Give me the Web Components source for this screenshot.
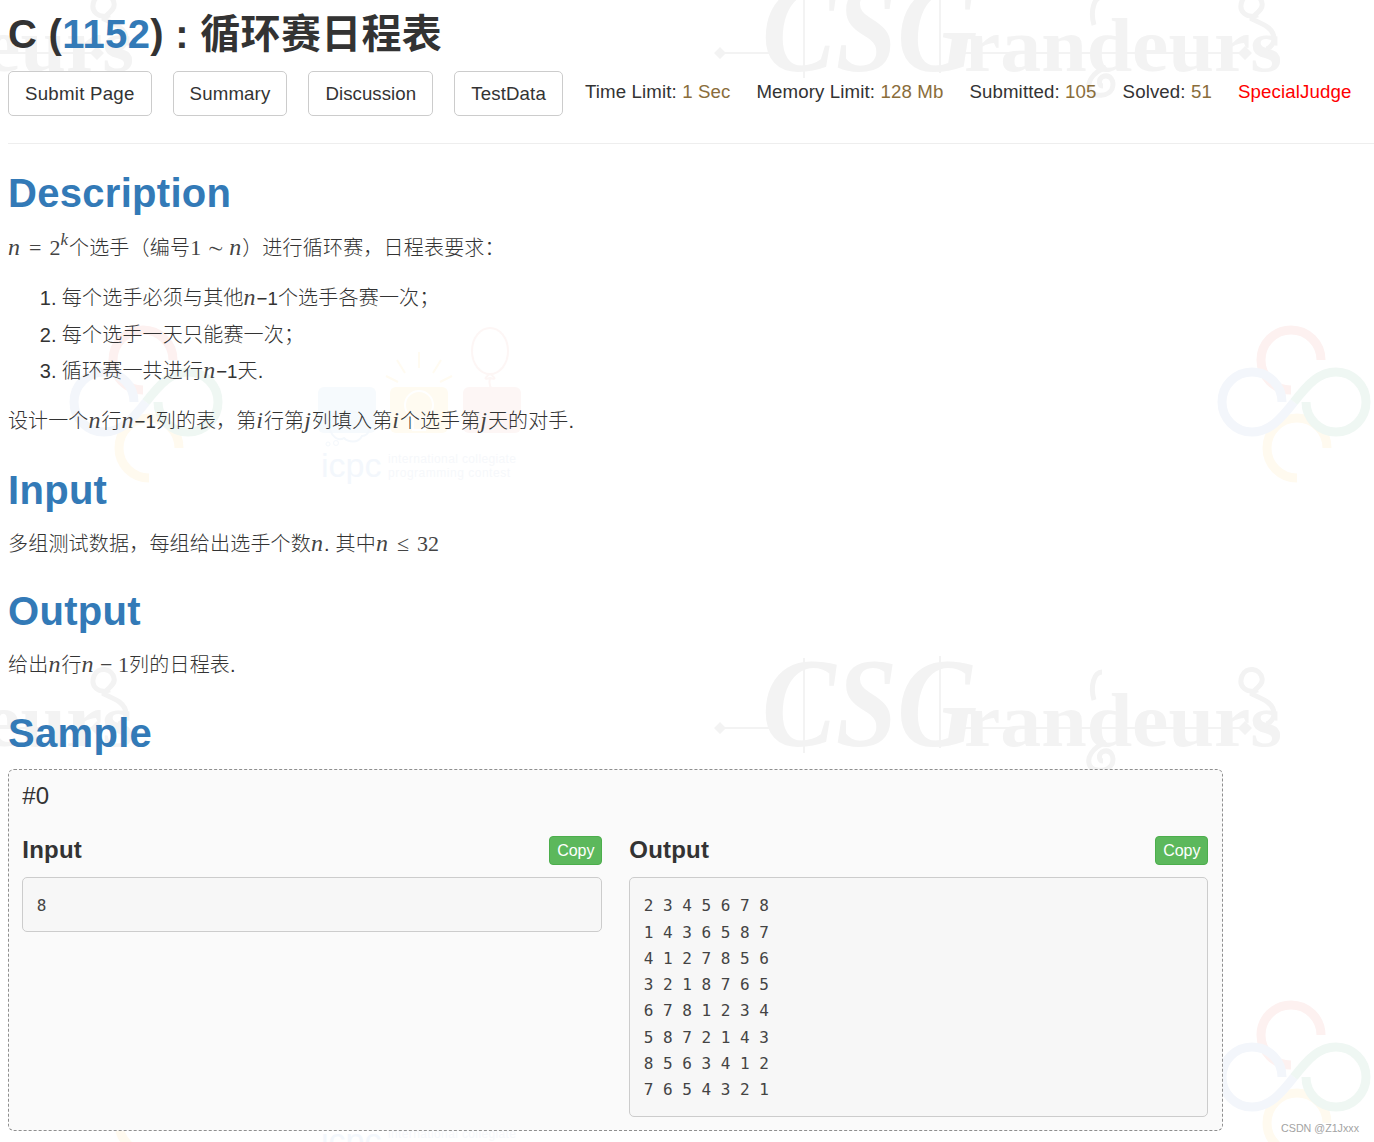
<!DOCTYPE html>
<html lang="zh"><head><meta charset="utf-8"><title>C (1152)</title>
<style>
html,body{margin:0;padding:0;overflow:hidden}
html{background:#fff}
body{font-family:"Liberation Sans","Noto Sans CJK SC",sans-serif;color:#333;font-size:20px;line-height:28.57px}
</style></head><body>
<oj-page>
  <oj-title num="1152" name="循环赛日程表"></oj-title>
  <oj-toolbar>
    <oj-btn style="--ls:.25px">Submit Page</oj-btn><oj-btn>Summary</oj-btn><oj-btn style="--ls:.05px">Discussion</oj-btn><oj-btn>TestData</oj-btn>
    <oj-stat slot="stats" label="Time Limit:" value="1 Sec"></oj-stat>
    <oj-stat slot="stats" label="Memory Limit:" value="128 Mb"></oj-stat>
    <oj-stat slot="stats" label="Submitted:" value="105"></oj-stat>
    <oj-stat slot="stats" label="Solved:" value="51"></oj-stat>
    <oj-stat slot="stats" alert value="SpecialJudge"></oj-stat>
  </oj-toolbar>
  <oj-section heading="Description" first>
    <oj-p><oj-m>n</oj-m><oj-r> = 2</oj-r><oj-m sup>k</oj-m>个选手（编号<oj-r tight>1 ∼ </oj-r><oj-m>n</oj-m>）进行循环赛，日程表要求：</oj-p>
    <oj-list>
      <oj-li n="1.">每个选手必须与其他<oj-m>n</oj-m><oj-d>−1</oj-d>个选手各赛一次；</oj-li>
      <oj-li n="2.">每个选手一天只能赛一次；</oj-li>
      <oj-li n="3.">循环赛一共进行<oj-m>n</oj-m><oj-d>−1</oj-d>天.</oj-li>
    </oj-list>
    <oj-p style="--ls:.1px">设计一个<oj-m>n</oj-m>行<oj-m>n</oj-m><oj-d>−1</oj-d>列的表，第<oj-m>i</oj-m>行第<oj-m>j</oj-m>列填入第<oj-m>i</oj-m>个选手第<oj-m>j</oj-m>天的对手.</oj-p>
  </oj-section>
  <oj-section heading="Input">
    <oj-p>多组测试数据，每组给出选手个数<oj-m>n</oj-m>. 其中<oj-m>n</oj-m><oj-r> ≤ 32</oj-r></oj-p>
  </oj-section>
  <oj-section heading="Output">
    <oj-p>给出<oj-m>n</oj-m>行<oj-m>n</oj-m><oj-r tight> − 1</oj-r>列的日程表.</oj-p>
  </oj-section>
  <oj-section heading="Sample" tight>
    <oj-sample label="#0">
      <oj-code slot="in" heading="Input">8</oj-code>
      <oj-code slot="out" heading="Output">2 3 4 5 6 7 8
1 4 3 6 5 8 7
4 1 2 7 8 5 6
3 2 1 8 7 6 5
6 7 8 1 2 3 4
5 8 7 2 1 4 3
8 5 6 3 4 1 2
7 6 5 4 3 2 1</oj-code>
    </oj-sample>
  </oj-section>
</oj-page>
<script>
const def=(name,css,html)=>{customElements.define(name,class extends HTMLElement{
  constructor(){super();this.attachShadow({mode:"open"}).innerHTML=`<style>${css}</style>`+(typeof html==="function"?html(this):html);}
});};

/* ---- faint background artwork ---- */
const csg=(x,y)=>`<g transform="translate(${x} ${y})" fill="#f3f3f3" font-family="Liberation Serif">
  <path d="M5 0H56M250 0H530" stroke="#f3f3f3" stroke-width="2" fill="none"/>
  <path d="M0 0l6-6 6 6-6 6zM524 0l7-7 7 7-7 7z"/>
  <text x="48" y="18" font-size="128" font-style="italic" font-weight="700" textLength="215" lengthAdjust="spacingAndGlyphs">CSG</text>
  <text x="250" y="18" font-size="76" textLength="318" lengthAdjust="spacingAndGlyphs" font-weight="700">randeurs</text>
  <path d="M90-70V25M226-72V20" stroke="#f3f3f3" stroke-width="2" fill="none"/>
  <path d="M392 14c-14 6-20 16-16 24 4 6 18 6 22-2 3-8-2-16-10-12-4 3-3 9 1 9" stroke="#f3f3f3" stroke-width="5" fill="none"/>
  <path d="M380-28c-4-14 0-28 8-28" stroke="#f3f3f3" stroke-width="5" fill="none"/>
  <path d="M544-38c-12 4-20-4-16-14s18-8 20 2c2 8-10 12-10 16 8 4 22 8 22 20 0 6-6 10-8 10" stroke="#f3f3f3" stroke-width="5" fill="none"/>
</g>`;
const rings=(x,y)=>`<g transform="translate(${x} ${y})" fill="none" stroke-width="9">
  <path d="M27-42A30 30 0 1 0-3-12" stroke="#fdf1f0"/>
  <path d="M33 46A30 30 0 1 0 3 76" stroke="#fffaef"/>
  <path d="M-12 0A30 30 0 1 0-42 30C-25 30-14 18 0 0" stroke="#f3f6fb"/>
  <path d="M0 0C14-18 25-30 42-30A30 30 0 1 1 12 0" stroke="#eff7f3"/>
</g>`;
const icpc=(x,y)=>`<g transform="translate(${x} ${y})">
  <rect x="318" y="387" width="58" height="46" rx="6" fill="#f6fafd"/>
  <rect x="390" y="387" width="58" height="46" rx="6" fill="#fffbf1"/>
  <rect x="463" y="387" width="58" height="46" rx="6" fill="#fdf6f5"/>
  <path d="M419 352v16M397 360l8 13M441 360l-8 13M386 376l12 6M452 376l-12 6" stroke="#fffbf1" stroke-width="2"/>
  <circle cx="419" cy="405" r="14" fill="none" stroke="#fff" stroke-width="2"/>
  <path d="M413 418v12h12v-12" fill="none" stroke="#fff" stroke-width="2"/>
  <ellipse cx="490" cy="351" rx="18" ry="23" fill="none" stroke="#fdf6f5" stroke-width="2"/>
  <path d="M490 374c-6 4-6 6 0 4 6 2 6 0 0-4M490 378c-4 14 14 16 6 40l-6 14" fill="none" stroke="#fdf6f5" stroke-width="2"/>
  <path d="M330 430c-8-10 2-18 10-14 6-8 22-6 24 6 8 2 6 14-2 14-4 8-14 6-18 2-6 4-12-2-14-8z" fill="none" stroke="#f4f8fc" stroke-width="2"/>
  <circle cx="328" cy="444" r="2" fill="none" stroke="#f4f8fc"/><circle cx="336" cy="443" r="2.5" fill="none" stroke="#f4f8fc"/>
  <text x="321" y="477" font-family="Liberation Sans" font-size="34" fill="#f3f7fc">icpc</text>
  <text x="388" y="463" font-family="Liberation Sans" font-size="12" fill="#f6f8fb" textLength="128">international collegiate</text>
  <text x="388" y="477" font-family="Liberation Sans" font-size="12" fill="#f6f8fb" textLength="122">programming contest</text>
</g>`;
def("wm-backdrop",":host{position:absolute;inset:0;z-index:-1;overflow:hidden;display:block}svg{display:block}",
`<svg width="1374" height="1142" viewBox="0 0 1374 1142" aria-hidden="true">
${csg(714,53)}${csg(714,728)}${csg(-434,53)}${csg(-434,728)}
${rings(1294,402)}${rings(1294,1077)}${rings(146,402)}${rings(146,1077)}
${icpc(0,0)}${icpc(0,675)}
</svg>`);

def("oj-page",":host{display:block;position:relative;isolation:isolate;height:1142px;padding-left:8px;box-sizing:border-box;overflow:hidden}.mark{position:absolute;right:15px;bottom:7px;font-size:10.7px;line-height:13px;color:#a3a3a3}",
`<wm-backdrop></wm-backdrop><slot></slot><div class="mark">CSDN @Z1Jxxx</div>`);

def("oj-title",":host{display:block;padding-top:12px;margin-bottom:15px;font-size:40px;line-height:44px;font-weight:700;color:#333;letter-spacing:.3px}b{color:#337ab7;font-weight:700}",
t=>`C (<b>${t.getAttribute("num")}</b>) : ${t.getAttribute("name")}`);

def("oj-toolbar",":host{display:block;padding-bottom:27px;border-bottom:1px solid #eee;margin-bottom:27px}.r{display:flex;gap:21px;align-items:flex-start;height:45px}.s{display:flex;gap:26px;margin-left:1px;height:40px;align-items:center}",
`<div class="r"><slot></slot><div class="s"><slot name="stats"></slot></div></div>`);

def("oj-btn",":host{display:block;box-sizing:border-box;height:45px;padding:8px 16px;border:1px solid #ccc;border-radius:5px;background:#fff;font-size:18.67px;line-height:27px;color:#333;white-space:nowrap;letter-spacing:var(--ls,.15px)}","<slot></slot>");

def("oj-stat",":host{display:block;font-size:18.67px;line-height:27px;white-space:nowrap;color:#333;letter-spacing:.12px}b{font-weight:400;color:#8a6d3b}b.a{color:#f00}",
t=>t.hasAttribute("alert")?`<b class="a">${t.getAttribute("value")}</b>`:`${t.getAttribute("label")} <b>${t.getAttribute("value")}</b>`);

def("oj-section",":host{display:block;margin-bottom:var(--gap,31px)}:host([tight]){margin-bottom:0}h2{margin:0 0 18px;font-size:40px;line-height:44px;font-weight:700;color:#337ab7;letter-spacing:.3px}:host([tight]) h2{margin-bottom:14px}:host([first]) h2{margin-bottom:19px}",
t=>`<h2>${t.getAttribute("heading")}</h2><slot></slot>`);

def("oj-p",":host{display:block;font-weight:300;color:#333;white-space:nowrap;letter-spacing:var(--ls,.2px)}","<slot></slot>");
def("oj-m",`:host{font-family:"Liberation Serif",serif;font-style:italic;font-size:24px;line-height:0;padding-right:1px;font-weight:400;color:#444;letter-spacing:0}:host([sup]){font-size:17px;position:relative;top:-10px;padding-right:1px}`,"<slot></slot>");
def("oj-r",`:host{font-family:"Liberation Serif",serif;font-size:22px;line-height:0;font-weight:400;white-space:pre;word-spacing:2.5px;color:#444;letter-spacing:0}:host([tight]){word-spacing:0}`,"<slot></slot>");
def("oj-d",`:host{font-size:18.67px;font-weight:400;letter-spacing:0}`,"<slot></slot>");

def("oj-list",":host{display:block;margin:17.5px 0 17px;padding-left:53.8px}","<slot></slot>");
def("oj-li",":host{display:block;position:relative;line-height:36px;font-weight:300;white-space:nowrap;letter-spacing:.2px}.n{position:absolute;left:-22px;top:0;font-weight:400;letter-spacing:0}",
t=>`<span class="n">${t.getAttribute("n")}</span><slot></slot>`);

def("oj-sample",":host{display:block;box-sizing:border-box;width:1215px;height:362px;padding:13.33px;border:1px dashed #8f8f8f;border-radius:6px;background:#fafafa}.h{font-size:24px;line-height:26.4px;margin-bottom:27px}.g{display:grid;grid-template-columns:580px 579px;column-gap:27px;align-items:start}",
t=>`<div class="h">${t.getAttribute("label")}</div><div class="g"><slot name="in"></slot><slot name="out"></slot></div>`);

def("oj-code",`:host{display:block}.t{display:flex;justify-content:space-between;align-items:center;height:29px;margin-bottom:12px}h4{margin:-2px 0 0;font-size:24px;line-height:26px;font-weight:700;color:#333;letter-spacing:.2px}
button{box-sizing:border-box;height:29px;width:53px;padding:0;border:1px solid #4cae4c;border-radius:4px;background:#5cb85c;color:#fff;font:16px/24px "Liberation Sans",sans-serif}
pre{margin:0;box-sizing:border-box;padding:14.8px 13.33px 11.87px;border:1px solid #ccc;border-radius:5px;background:#f7f7f7;color:#444;font:16px/26.3px "DejaVu Sans Mono",monospace}`,
t=>`<div class="t"><h4>${t.getAttribute("heading")}</h4><button>Copy</button></div><pre><slot></slot></pre>`);
</script>
</body></html>
